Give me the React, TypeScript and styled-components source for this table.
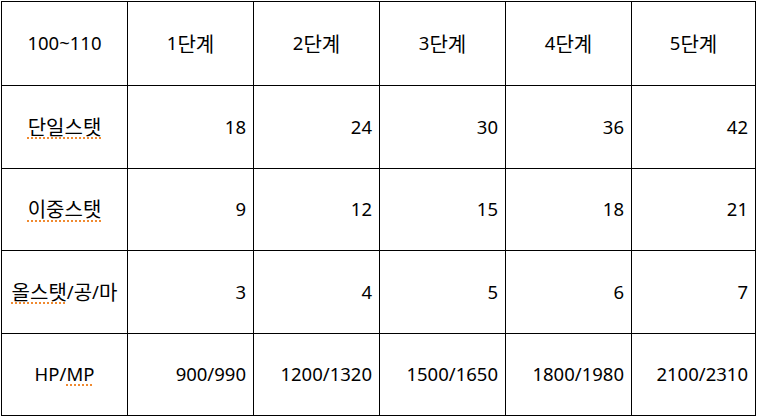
import React from "react";
import styled, { createGlobalStyle } from "styled-components";

const Global = createGlobalStyle`
  html, body { margin: 0; padding: 0; background: #ffffff; }
  body { font-family: "Noto Sans", "Noto Sans CJK KR", sans-serif; }
`;

const Page = styled.div`
  padding: 1px 0 0 1px;
`;

const Grid = styled.div`
  display: grid;
  grid-template-columns: 126px 126px 126px 126px 126px 124px;
  grid-template-rows: 84px 83px 82px 83px 82px;
  width: 754px;
  border-left: 1px solid #000;
  border-top: 1px solid #000;
  box-sizing: content-box;
  font-family: "Noto Sans", "Noto Sans CJK KR", sans-serif;
  font-size: 18.5px;
  color: #000;
`;

const Cell = styled.div<{ $align: "center" | "right" }>`
  box-sizing: border-box;
  border-right: 1px solid #000;
  border-bottom: 1px solid #000;
  display: flex;
  align-items: center;
  justify-content: ${(p) => (p.$align === "right" ? "flex-end" : "center")};
  padding: 0 ${(p) => (p.$align === "right" ? "7px" : "0")} 0 0;
  white-space: nowrap;
  line-height: 1;
`;

const Ko = styled.span`
  font-family: "Noto Sans CJK KR", sans-serif;
  font-size: 20px;
`;

const Spell = styled.span`
  text-decoration: underline dotted #f08a30;
  text-decoration-thickness: 1.5px;
  text-underline-offset: 3px;
`;

const header: React.ReactNode[] = [
  "100~110",
  <>1<Ko>단계</Ko></>,
  <>2<Ko>단계</Ko></>,
  <>3<Ko>단계</Ko></>,
  <>4<Ko>단계</Ko></>,
  <>5<Ko>단계</Ko></>,
];

const rows: { label: React.ReactNode; values: string[] }[] = [
  { label: <Spell><Ko>단일스탯</Ko></Spell>, values: ["18", "24", "30", "36", "42"] },
  { label: <Spell><Ko>이중스탯</Ko></Spell>, values: ["9", "12", "15", "18", "21"] },
  {
    label: (
      <>
        <Spell><Ko>올스탯</Ko></Spell>/<Ko>공</Ko>/<Ko>마</Ko>
      </>
    ),
    values: ["3", "4", "5", "6", "7"],
  },
  {
    label: (
      <>
        HP/<Spell>MP</Spell>
      </>
    ),
    values: ["900/990", "1200/1320", "1500/1650", "1800/1980", "2100/2310"],
  },
];

export default function App() {
  return (
    <>
      <Global />
      <Page>
        <Grid>
          {header.map((h, i) => (
            <Cell key={i} $align="center">
              {h}
            </Cell>
          ))}
          {rows.map((r, i) => (
            <React.Fragment key={i}>
              <Cell $align="center">{r.label}</Cell>
              {r.values.map((v, j) => (
                <Cell key={j} $align="right">
                  {v}
                </Cell>
              ))}
            </React.Fragment>
          ))}
        </Grid>
      </Page>
    </>
  );
}
